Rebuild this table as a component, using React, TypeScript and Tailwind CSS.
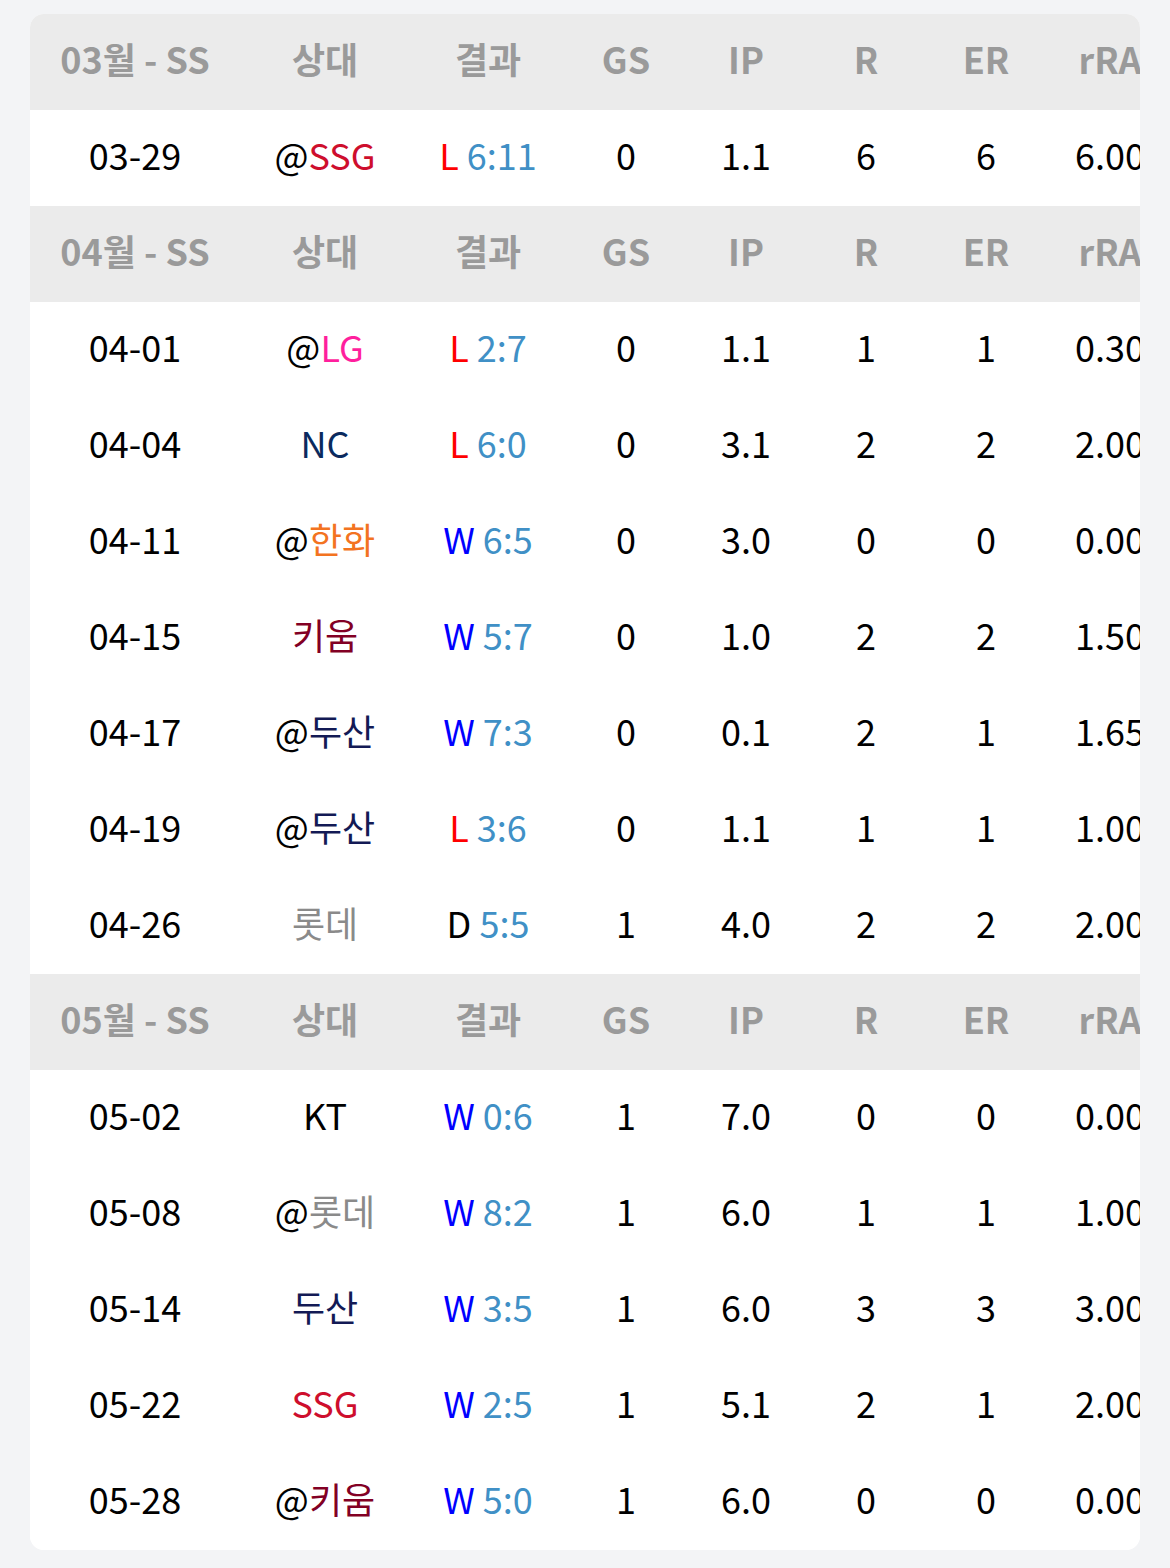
import React from "react";

type Row = {
  date: string;
  at: boolean;
  team: string;
  teamColor: string;
  res: "W" | "L" | "D";
  score: string;
  gs: string;
  ip: string;
  r: string;
  er: string;
  rra: string;
};

const C = {
  SSG: "text-[#ce0e2d]",
  LG: "text-[#ff1f9d]",
  NC: "text-[#0a2a5e]",
  HH: "text-[#f37321]",
  KW: "text-[#820024]",
  DS: "text-[#131a55]",
  LT: "text-[#8a8a8a]",
  KT: "text-[#000000]",
};

const months: { label: string; rows: Row[] }[] = [
  {
    label: "03월 - SS",
    rows: [
      { date: "03-29", at: true, team: "SSG", teamColor: C.SSG, res: "L", score: "6:11", gs: "0", ip: "1.1", r: "6", er: "6", rra: "6.00" },
    ],
  },
  {
    label: "04월 - SS",
    rows: [
      { date: "04-01", at: true, team: "LG", teamColor: C.LG, res: "L", score: "2:7", gs: "0", ip: "1.1", r: "1", er: "1", rra: "0.30" },
      { date: "04-04", at: false, team: "NC", teamColor: C.NC, res: "L", score: "6:0", gs: "0", ip: "3.1", r: "2", er: "2", rra: "2.00" },
      { date: "04-11", at: true, team: "한화", teamColor: C.HH, res: "W", score: "6:5", gs: "0", ip: "3.0", r: "0", er: "0", rra: "0.00" },
      { date: "04-15", at: false, team: "키움", teamColor: C.KW, res: "W", score: "5:7", gs: "0", ip: "1.0", r: "2", er: "2", rra: "1.50" },
      { date: "04-17", at: true, team: "두산", teamColor: C.DS, res: "W", score: "7:3", gs: "0", ip: "0.1", r: "2", er: "1", rra: "1.65" },
      { date: "04-19", at: true, team: "두산", teamColor: C.DS, res: "L", score: "3:6", gs: "0", ip: "1.1", r: "1", er: "1", rra: "1.00" },
      { date: "04-26", at: false, team: "롯데", teamColor: C.LT, res: "D", score: "5:5", gs: "1", ip: "4.0", r: "2", er: "2", rra: "2.00" },
    ],
  },
  {
    label: "05월 - SS",
    rows: [
      { date: "05-02", at: false, team: "KT", teamColor: C.KT, res: "W", score: "0:6", gs: "1", ip: "7.0", r: "0", er: "0", rra: "0.00" },
      { date: "05-08", at: true, team: "롯데", teamColor: C.LT, res: "W", score: "8:2", gs: "1", ip: "6.0", r: "1", er: "1", rra: "1.00" },
      { date: "05-14", at: false, team: "두산", teamColor: C.DS, res: "W", score: "3:5", gs: "1", ip: "6.0", r: "3", er: "3", rra: "3.00" },
      { date: "05-22", at: false, team: "SSG", teamColor: C.SSG, res: "W", score: "2:5", gs: "1", ip: "5.1", r: "2", er: "1", rra: "2.00" },
      { date: "05-28", at: true, team: "키움", teamColor: C.KW, res: "W", score: "5:0", gs: "1", ip: "6.0", r: "0", er: "0", rra: "0.00" },
    ],
  },
];

const cols = "grid grid-cols-[210px_170px_156px_120px_120px_120px_120px_128px] w-[1144px]";

const resColor = { W: "text-[#0000ff]", L: "text-[#ff0000]", D: "text-black" };

const cell = "flex items-center justify-center whitespace-nowrap pb-[7px]";

function Header({ label }: { label: string }) {
  const heads = [label, "상대", "결과", "GS", "IP", "R", "ER", "rRA"];
  return (
    <div className={`${cols} h-[96px] bg-[#ebebeb] text-[#9a9a9a] font-bold`}>
      {heads.map((h, i) => (
        <div key={i} className={cell}>
          {h}
        </div>
      ))}
    </div>
  );
}

function DataRow({ row }: { row: Row }) {
  return (
    <div className={`${cols} h-[96px] bg-white text-black`}>
      <div className={cell}>{row.date}</div>
      <div className={cell}>
        {row.at && <span>@</span>}
        <span className={row.teamColor}>{row.team}</span>
      </div>
      <div className={cell}>
        <span className={resColor[row.res]}>{row.res}</span>
        <span className="text-[#4090c6]">&nbsp;{row.score}</span>
      </div>
      <div className={cell}>{row.gs}</div>
      <div className={cell}>{row.ip}</div>
      <div className={cell}>{row.r}</div>
      <div className={cell}>{row.er}</div>
      <div className={cell}>{row.rra}</div>
    </div>
  );
}

export default function App() {
  return (
    <div className="min-h-[1568px] w-[1170px] bg-[#f3f4f6] pt-[14px] font-['Noto_Sans_CJK_KR','Noto_Sans',sans-serif] text-[36px] leading-[1.2]">
      <div className="ml-[30px] w-[1110px] overflow-hidden rounded-[14px] bg-white">
        {months.map((m) => (
          <div key={m.label}>
            <Header label={m.label} />
            {m.rows.map((r, i) => (
              <DataRow key={i} row={r} />
            ))}
          </div>
        ))}
      </div>
    </div>
  );
}
